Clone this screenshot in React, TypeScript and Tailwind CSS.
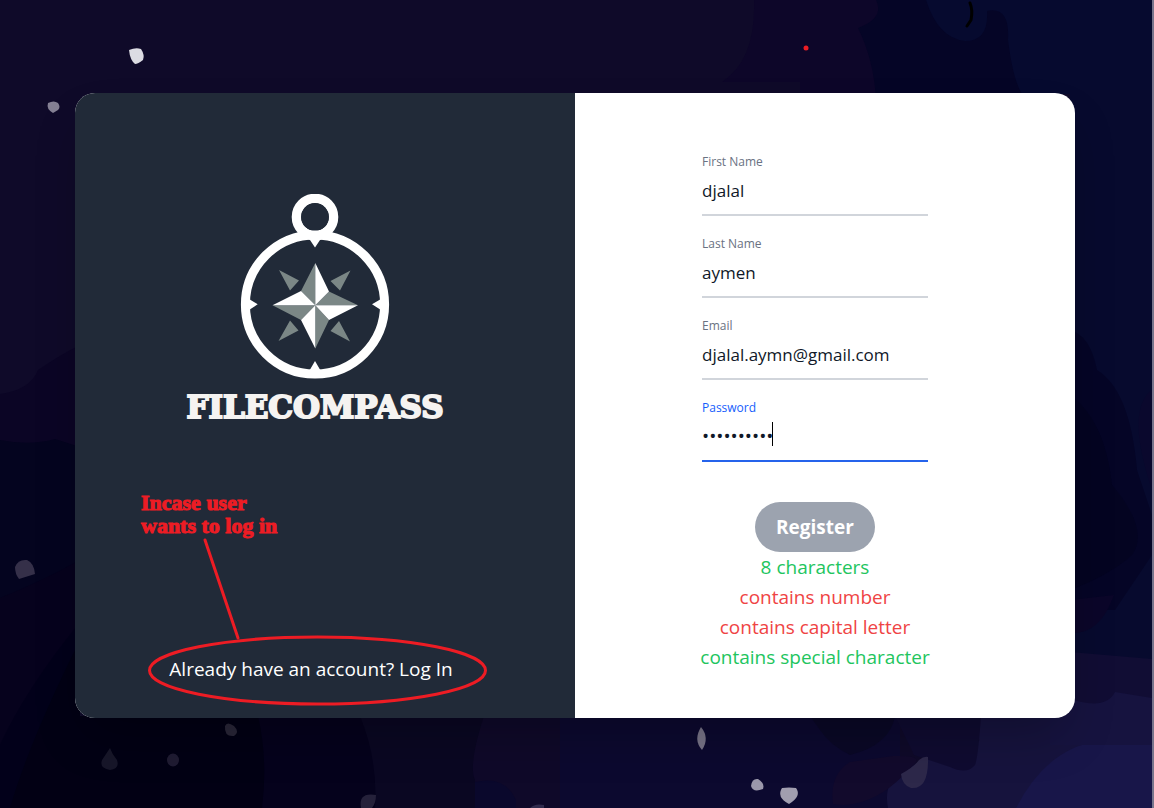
import { useState } from "react";

type FieldProps = {
  id: string;
  label: string;
  type: string;
  initial: string;
  active?: boolean;
};

function Field({ id, label, type, initial, active = false }: FieldProps) {
  const [value, setValue] = useState(initial);
  return (
    <div className="relative">
      <label
        htmlFor={id}
        className={
          active
            ? "block text-[12px] leading-5 text-blue-600"
            : "block text-[12px] leading-5 text-gray-500"
        }
      >
        {label}
      </label>
      <input
        id={id}
        type={type}
        value={value}
        onChange={(e) => setValue(e.target.value)}
        className={
          active
            ? "block h-11 w-full border-b-2 border-[#2563eb] bg-transparent pb-1.5 text-[19px] text-gray-900 outline-none"
            : "block h-11 w-full border-b-2 border-[#d1d5db] bg-transparent pb-1.5 text-[17px] text-gray-900 outline-none"
        }
      />
      {active && <span className="absolute left-[70px] top-6 h-6 w-px bg-black" />}
    </div>
  );
}

function CompassLogo() {
  return (
    <svg viewBox="15 9 150 185" className="h-[185px] w-[150px]" aria-hidden="true">
      <circle cx="90" cy="32" r="18.6" fill="none" stroke="#fff" strokeWidth="9.4" />
      <path fill="#fff" d="M74 46L106 46L110 51H70Z" />
      <circle cx="90" cy="32" r="13.8" fill="#212a38" />
      <circle cx="90" cy="119.5" r="69.6" fill="none" stroke="#fff" strokeWidth="9" />
      <path
        fill="#fff"
        d="M84 53.5H96L90 62.5ZM24 114L32.7 119.3L24 125ZM156 114L147 119.3L156 125ZM84.5 185.5H95.5L90 176Z"
      />
      <path
        fill="#7b8786"
        d="M90.3 120.3L76 106L90.3 78ZM90.3 120.3L104 106.5L133 120.3ZM90.3 120.3L104 135L90.3 163.5ZM90.3 120.3L76 135L47.5 120.3Z"
      />
      <path
        fill="#fff"
        d="M90.3 120.3L90.3 78L104 106.5ZM90.3 120.3L133 120.3L104 135ZM90.3 120.3L90.3 163.5L76 135ZM90.3 120.3L47.5 120.3L76 106Z"
      />
      <path
        fill="#7b8786"
        d="M54 85L74 95.5L65 105.5ZM125.5 85.5L115 105.5L105.5 96ZM53.5 156L65 135.5L73.5 145.5ZM125 156.5L114 136L105.5 146Z"
      />
    </svg>
  );
}

function NightBackdrop() {
  return (
    <svg
      viewBox="0 0 1152 808"
      preserveAspectRatio="xMidYMid slice"
      className="absolute inset-0 h-full w-full"
      aria-hidden="true"
    >
      <rect width="1152" height="808" fill="#0f0a29" />
      <path fill="#0b0525" d="M0 394Q30 390 38 370Q60 355 78 346V460H0Z" />
      <path fill="#04041f" d="M0 440Q30 446 55 439L80 447V600H0Z" />
      <path fill="#06021d" d="M0 598Q40 582 80 560V808H0Z" />
      <path fill="#02001a" d="M0 808V745Q25 690 80 622V808Z" />
      <path fill="#020014" d="M80 640V716H290V808H10Q30 740 80 640Z" />
      <path fill="#05021c" d="M258 716Q268 760 262 808H378V716Z" />
      <path fill="#0a0722" d="M360 716Q378 760 375 808H490V716Z" />
      <path fill="#0f0929" d="M484 716Q468 765 475 780V808H600V716Z" />
      <path fill="#0a082c" d="M475 782Q505 775 516 800V808H475Z" />
      <path fill="#0c092f" d="M560 716H900V808H560Z" />
      <path fill="#0a0826" d="M810 716H895Q890 745 850 755Q830 745 820 730Z" />
      <path fill="#16133d" d="M890 716H1152V808H888Q883 782 902 774L925 757L980 740Z" />
      <path fill="#0f0b30" d="M895 716H981Q978 758 975 765Q967 775 950 767L914 755Z" />
      <path fill="#120a2c" d="M893 756Q920 755 916 762Q895 786 878 795Q855 808 833 804Q829 775 850 762Z" />
      <path fill="#181649" d="M1016 808Q1050 742 1110 740Q1140 739 1152 742V808Z" />
      <path fill="#0d0629" d="M754 0Q756 60 722 82H800V100H880V0Z" />
      <path fill="#050526" d="M876 0Q885 18 858 28Q874 60 876 100H1030V0Z" />
      <path fill="#060a2f" d="M926 0Q938 38 965 41Q989 41 987 11Q1010 6 1008 40Q1013 80 1022 94H1070V410H1152V0Z" />
      <path fill="#070a2e" d="M1070 90H1152V660H1070Z" />
      <path fill="#050526" d="M1070 330Q1090 335 1097 370Q1130 390 1137 470Q1147 500 1152 515V555L1115 610H1070Z" />
      <path fill="#040421" d="M1070 395Q1105 420 1112 485Q1150 530 1132 555Q1110 575 1070 590Z" />
      <path fill="#0a082d" d="M1152 390Q1125 410 1152 490Z" />
      <path fill="#0b0629" d="M1070 600L1114 595Q1100 635 1070 633Z" />
      <path fill="#110d34" d="M1070 652L1152 659V705H1070Z" />
      <path fill="#16133f" d="M1065 697Q1105 712 1115 692L1152 698V745H1050V716Z" />

      <path fill="#dcdce3" d="M129 50Q136 47 141 49Q145 55 143 60Q138 64 135 64Q130 60 129 50Z" />
      <path fill="#858194" d="M48 103Q54 100 58 103Q61 107 58 110L53 113Q46 109 48 103Z" />
      <path fill="#353049" d="M15 567Q18 559 27 560Q34 563 35 574L19 579Q15 574 15 567Z" />
      <path fill="#292638" d="M225 726Q227 721 234 726Q240 732 234 736Q224 737 225 726Z" />
      <path fill="#171629" d="M110 748Q112 754 117 760Q120 769 110 770Q99 768 102 760Z" />
      <ellipse cx="173" cy="760" rx="6" ry="6.5" fill="#1f1b32" />
      <path fill="#25213a" d="M361 808Q358 792 376 795Q376 803 372 808Z" />
      <path fill="#302a4c" d="M530 808Q535 803 544 805V808Z" />
      <path fill="#777387" d="M701 727Q710 738 702 750Q693 740 701 727Z" />
      <path fill="#9b98ab" d="M751 786Q752 778 758 779Q765 783 763 789Q753 793 751 786Z" />
      <path fill="#a19eaf" d="M782 788Q789 787 796 788Q802 796 789 804Q776 797 782 788Z" />
      <path fill="#2d284a" d="M928 757Q929 790 911 788Q902 785 901 774Q914 767 919 760Q924 756 928 757Z" />
      <path
        fill="none"
        stroke="#000"
        strokeWidth="3"
        strokeLinecap="round"
        d="M970 3Q973 10 971 20L967 26"
      />
      <circle cx="806" cy="48" r="2.5" fill="#ed1c24" />
    </svg>
  );
}

const rules = [
  { text: "8 characters", ok: true },
  { text: "contains number", ok: false },
  { text: "contains capital letter", ok: false },
  { text: "contains special character", ok: true },
];

export default function App() {
  return (
    <div className="relative flex min-h-screen items-center justify-center border-r-2 border-[#77758c] bg-[#0f0a29] pr-0.5 pt-[3px] font-['Open_Sans','Noto_Sans',sans-serif]">
      <NightBackdrop />
      <main className="relative grid w-full max-w-[1000px] grid-cols-2 overflow-hidden rounded-[20px] bg-white shadow-2xl">
        <section className="flex flex-col bg-[#212a38] pb-[34px] pt-[101px]">
          <div className="flex flex-col items-center pr-5">
            <CompassLogo />
            <h1 className="mt-2 font-['DejaVu_Serif',serif] text-[31px] font-bold leading-10 text-[#f5f3f1] [-webkit-text-stroke:2px_#f5f3f1]">
              FILECOMPASS
            </h1>
          </div>
          <p className="mt-16 pl-[66px] font-['Liberation_Serif',serif] text-[22px] font-bold leading-[23px] text-[#ed1c24] [-webkit-text-stroke:1px_#ed1c24]">
            Incase user
            <br />
            wants to log in
          </p>
          <div className="relative mx-auto mt-auto pr-7 text-center">
            <a href="#login" className="text-[19px] leading-[30px] text-white">
              Already have an account? Log In
            </a>
            <svg
              viewBox="148 538 340 169"
              className="pointer-events-none absolute -bottom-[22px] -left-[21px] h-[169px] w-[340px]"
              fill="none"
              stroke="#ed1c24"
              strokeWidth="3"
              aria-hidden="true"
            >
              <path d="M205 541L238 639" strokeLinecap="round" />
              <ellipse cx="317.5" cy="671.5" rx="168" ry="33.5" />
            </svg>
          </div>
        </section>
        <section className="flex justify-center pb-[46px] pr-5 pt-[59px]">
          <form className="flex w-[226px] flex-col" onSubmit={(e) => e.preventDefault()}>
            <div className="flex flex-col gap-[18px]">
              <Field id="first" label="First Name" type="text" initial="djalal" />
              <Field id="last" label="Last Name" type="text" initial="aymen" />
              <Field id="email" label="Email" type="email" initial="djalal.aymn@gmail.com" />
              <Field id="password" label="Password" type="password" initial="djalal@aym" active />
            </div>
            <button
              type="submit"
              className="mx-auto mt-10 h-[50px] w-[120px] rounded-full bg-[#9ca3af] text-[19px] font-bold text-white"
            >
              Register
            </button>
            <ul className="flex flex-col items-center whitespace-nowrap text-[19px] leading-[30px]">
              {rules.map((r) => (
                <li key={r.text} className={r.ok ? "text-[#22c55e]" : "text-[#ef4444]"}>
                  {r.text}
                </li>
              ))}
            </ul>
          </form>
        </section>
      </main>
    </div>
  );
}
